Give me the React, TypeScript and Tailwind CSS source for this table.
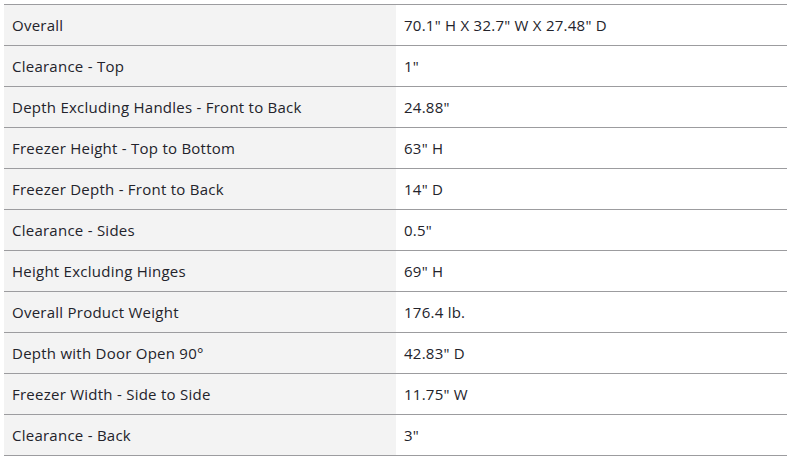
const specs: [string, string][] = [
  ['Overall', '70.1" H X 32.7" W X 27.48" D'],
  ['Clearance - Top', '1"'],
  ['Depth Excluding Handles - Front to Back', '24.88"'],
  ['Freezer Height - Top to Bottom', '63" H'],
  ['Freezer Depth - Front to Back', '14" D'],
  ['Clearance - Sides', '0.5"'],
  ['Height Excluding Hinges', '69" H'],
  ['Overall Product Weight', '176.4 lb.'],
  ['Depth with Door Open 90°', '42.83" D'],
  ['Freezer Width - Side to Side', '11.75" W'],
  ['Clearance - Back', '3"'],
];

const App = () => {
  return (
    <div className="min-h-screen bg-white pl-[4px] pt-[4px] font-['Open_Sans','Liberation_Sans',sans-serif] text-[15px] tracking-[0.25px] text-[#23232b]">
      <div className="w-[783px] border-b border-[#9c9c9f]">
        {specs.map(([label, value]) => (
          <div key={label} className="grid h-[41px] grid-cols-[392px_1fr] border-t border-[#9c9c9f]">
            <div className="flex items-center bg-[#f3f3f3] pl-[8px]">{label}</div>
            <div className="flex items-center pl-[8px]">{value}</div>
          </div>
        ))}
      </div>
    </div>
  );
};

export default App;
